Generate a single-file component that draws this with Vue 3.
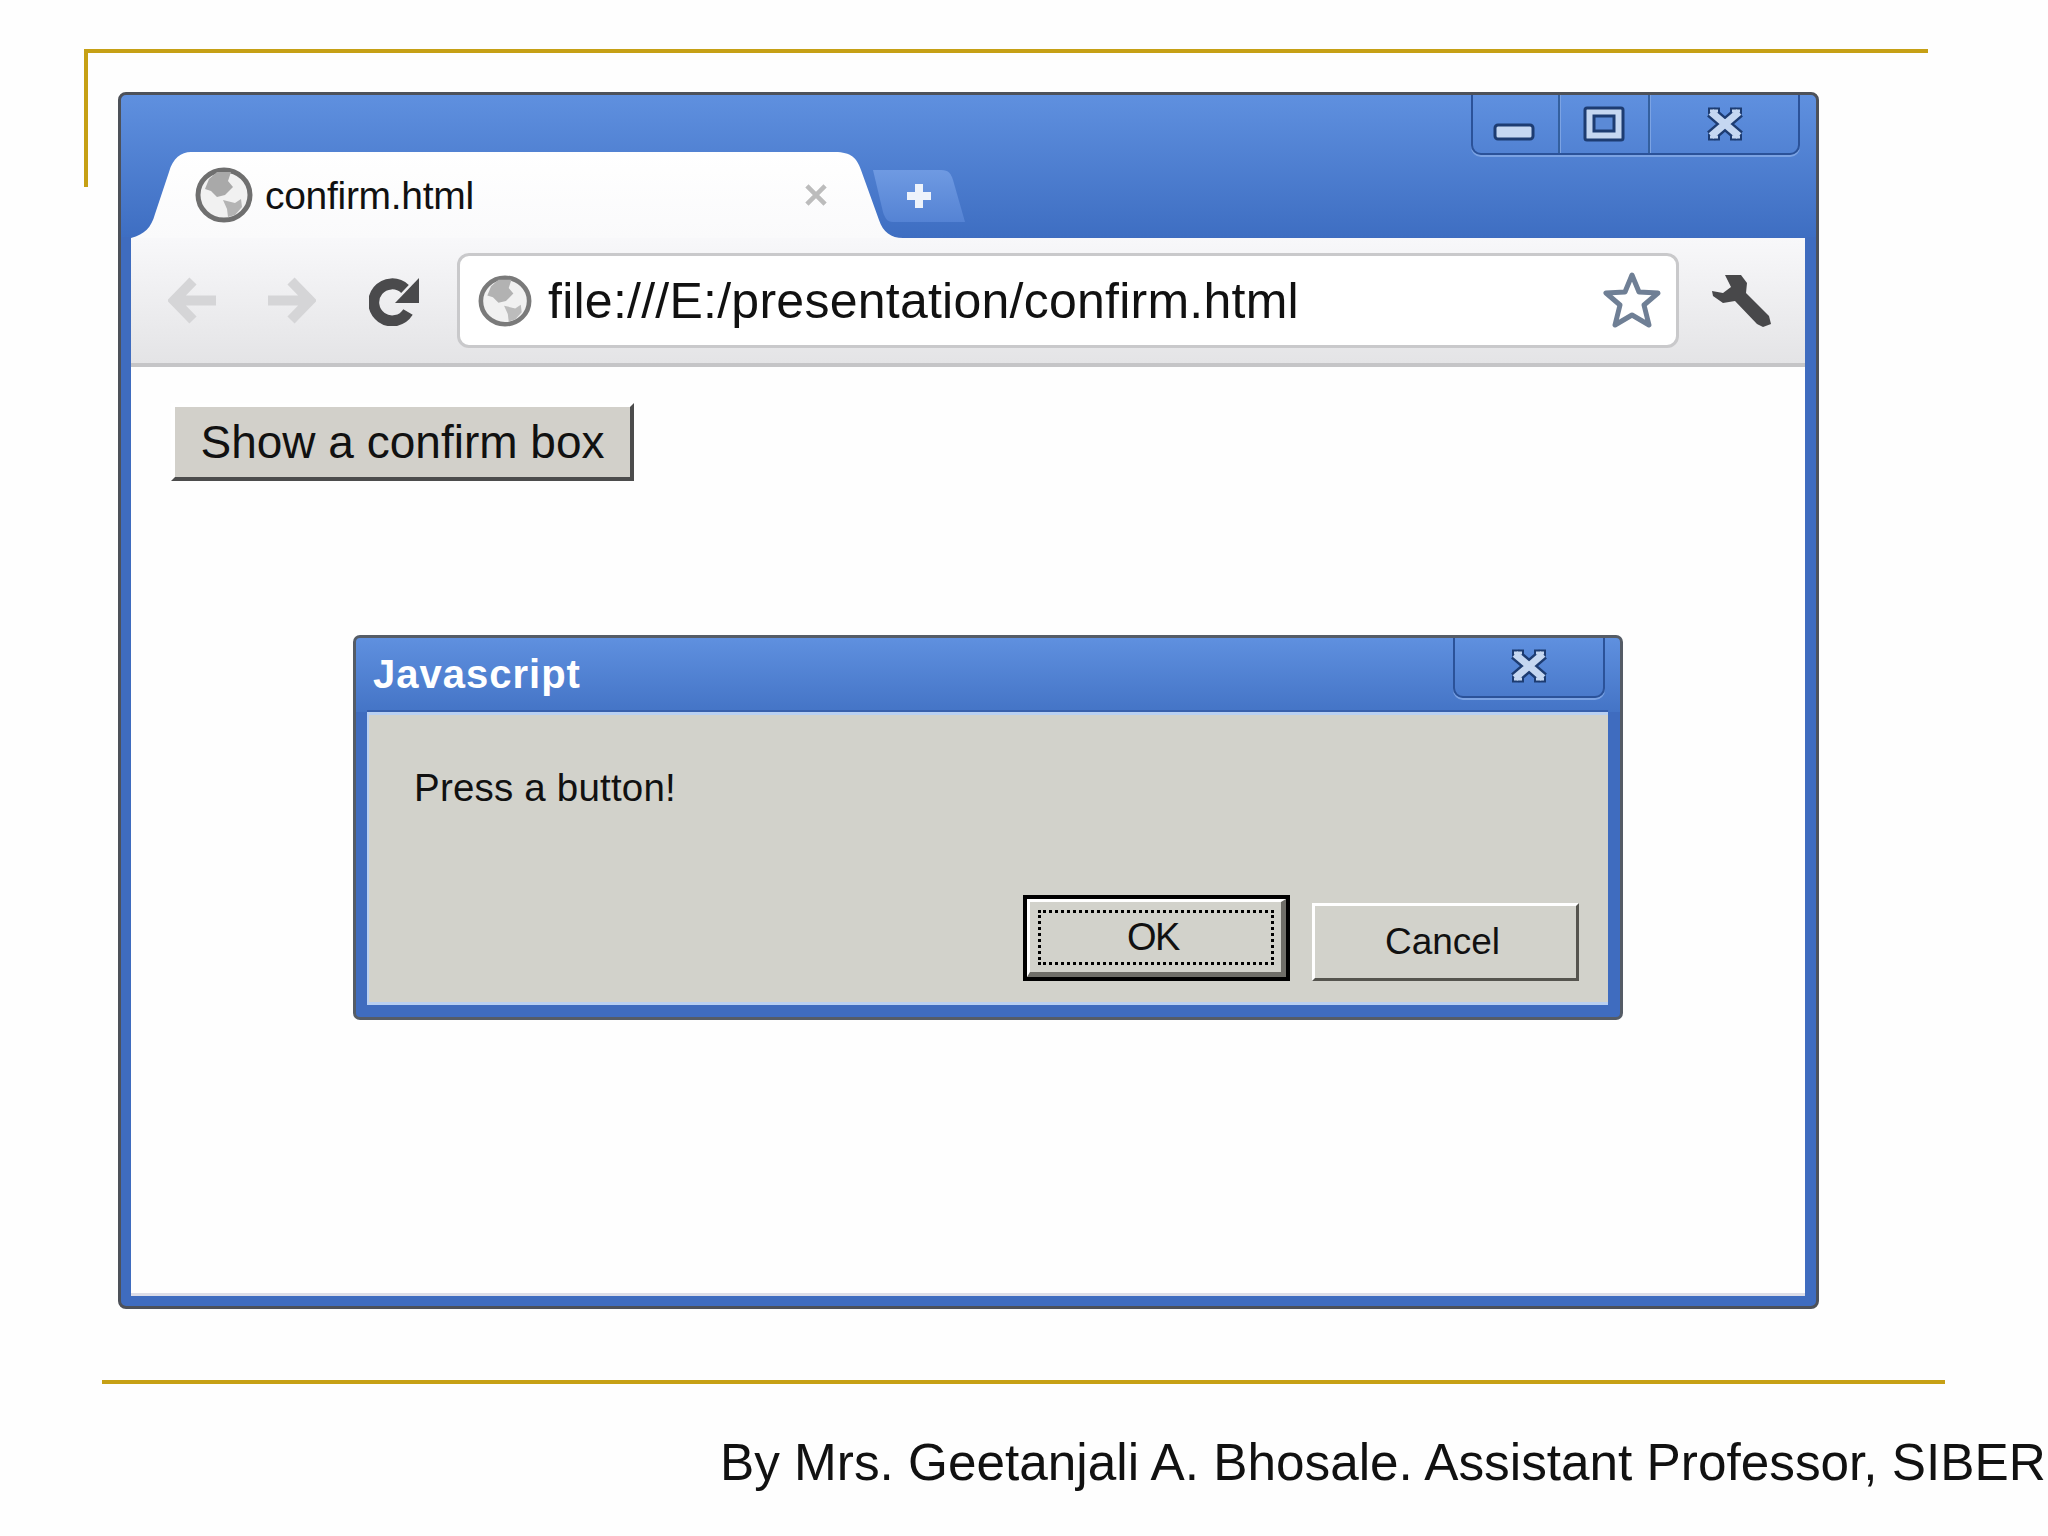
<template>
  <div class="slide">
    <div class="top-rule"></div>

    <div class="browser">
      <div class="titlebar">
        <div class="tabstrip">
          <div class="tab">
            <svg class="globe" viewBox="0 0 58 56">
              <ellipse cx="29" cy="28" rx="26" ry="25" fill="#f1f1f1" stroke="#6f6f6f" stroke-width="5" />
              <path d="M22 5 L36 5 L33 14 L38 20 L30 28 L22 30 L16 24 L10 22 L14 12 Z" fill="#a9a9a9" />
              <path d="M28 33 L40 36 L46 32 L47 40 L40 48 L33 50 L32 42 Z" fill="#b4b4b4" />
            </svg>
            <span class="tab-title">confirm.html</span>
            <svg class="tab-close" viewBox="0 0 20 20">
              <path d="M3 3 L17 17 M17 3 L3 17" stroke="#bcbcbc" stroke-width="3.5" fill="none" />
            </svg>
          </div>
          <div class="newtab">
            <svg class="plus" viewBox="0 0 26 26">
              <path d="M13 1 V25 M1 13 H25" stroke="#eef3fb" stroke-width="8" fill="none" />
            </svg>
          </div>
        </div>
        <div class="win-controls">
          <div class="win-btn min">
            <svg width="42" height="18" viewBox="0 0 42 18">
              <rect x="2" y="2" width="38" height="14" rx="3" fill="#c5d7f1" stroke="#1d3c72" stroke-width="3" />
            </svg>
          </div>
          <div class="win-btn max">
            <svg width="42" height="36" viewBox="0 0 42 36">
              <rect x="2" y="2" width="38" height="32" rx="2" fill="#c5d7f1" stroke="#1d3c72" stroke-width="3" />
              <rect x="11" y="10" width="20" height="15" fill="#5b8ad6" stroke="#1d3c72" stroke-width="3" />
            </svg>
          </div>
          <div class="win-btn close">
            <svg width="40" height="34" viewBox="0 0 40 34">
              <path d="M6 5 L34 29 M34 5 L6 29" stroke="#1d3c72" stroke-width="12" fill="none" />
              <path d="M3 4 H15 M25 4 H37 M3 30 H15 M25 30 H37" stroke="#1d3c72" stroke-width="7" fill="none" />
              <path d="M6 5 L34 29 M34 5 L6 29" stroke="#c5d7f1" stroke-width="7" fill="none" />
              <path d="M5 4 H13 M27 4 H35 M5 30 H13 M27 30 H35" stroke="#c5d7f1" stroke-width="3" fill="none" />
            </svg>
          </div>
        </div>
      </div>

      <div class="toolbar">
        <svg class="nav back" viewBox="0 0 50 47">
          <path d="M48 23.5 H8 M25 4 L6 23.5 L25 43" stroke="#d5d5d7" stroke-width="10" fill="none" />
        </svg>
        <svg class="nav forward" viewBox="0 0 50 47">
          <path d="M2 23.5 H42 M25 4 L44 23.5 L25 43" stroke="#d5d5d7" stroke-width="10" fill="none" />
        </svg>
        <svg class="reload" viewBox="0 0 51 50">
          <path d="M39 36 A18.5 18.5 0 1 1 36 13" stroke="#4a4a4c" stroke-width="11" fill="none" />
          <polygon points="50,2 50,27 26,27" fill="#4a4a4c" />
        </svg>
        <div class="address">
          <svg class="globe small" viewBox="0 0 58 56">
            <ellipse cx="29" cy="28" rx="26" ry="25" fill="#f1f1f1" stroke="#7a7a7a" stroke-width="5" />
            <path d="M22 5 L36 5 L33 14 L38 20 L30 28 L22 30 L16 24 L10 22 L14 12 Z" fill="#b2b2b2" />
            <path d="M28 33 L40 36 L46 32 L47 40 L40 48 L33 50 L32 42 Z" fill="#bcbcbc" />
          </svg>
          <span class="url">file:///E:/presentation/confirm.html</span>
          <svg class="star" viewBox="0 0 58 59">
            <polygon points="29,4 36,21 55,22 41,34 46,54 29,44 12,54 17,34 3,22 22,21"
              fill="#fff" stroke="#6f7f95" stroke-width="5" stroke-linejoin="round" />
          </svg>
        </div>
        <svg class="wrench" viewBox="0 0 60 53">
          <path d="M14 1 L30 1 L36 9 L35 19 L58 42 L60 50 L52 53 L46 50 L24 27 L12 29 L2 22 L1 17 L12 19 L20 13 Z" fill="#48484a" />
        </svg>
      </div>

      <div class="page">
        <button class="show-btn">Show a confirm box</button>

        <div class="dialog">
          <div class="dialog-title">
            <span class="dialog-name">Javascript</span>
            <div class="dialog-close">
              <svg width="40" height="34" viewBox="0 0 40 34">
                <path d="M6 5 L34 29 M34 5 L6 29" stroke="#1d3c72" stroke-width="12" fill="none" />
                <path d="M3 4 H15 M25 4 H37 M3 30 H15 M25 30 H37" stroke="#1d3c72" stroke-width="7" fill="none" />
                <path d="M6 5 L34 29 M34 5 L6 29" stroke="#c5d7f1" stroke-width="7" fill="none" />
                <path d="M5 4 H13 M27 4 H35 M5 30 H13 M27 30 H35" stroke="#c5d7f1" stroke-width="3" fill="none" />
              </svg>
            </div>
          </div>
          <div class="dialog-body">
            <p class="message">Press a button!</p>
            <div class="dialog-actions">
              <button class="btn-ok"><span class="ok-inner"><span class="ok-focus">OK</span></span></button>
              <button class="btn-cancel">Cancel</button>
            </div>
          </div>
        </div>
      </div>
    </div>

    <div class="bottom-rule"></div>
    <div class="footer">By Mrs. Geetanjali A. Bhosale. Assistant Professor, SIBER</div>
  </div>
</template>

<script setup>
</script>

<style>
html, body {
  margin: 0;
  background: #fff;
  overflow: hidden;
}
</style>

<style scoped>
.slide {
  position: relative;
  width: 2048px;
  height: 1536px;
  padding-top: 92px;
  box-sizing: border-box;
  overflow: hidden;
  background: #fefefe;
  font-family: "Liberation Sans", Arial, sans-serif;
  color: #000;
}

.top-rule {
  position: absolute;
  left: 84px;
  top: 49px;
  width: 1844px;
  height: 138px;
  box-sizing: border-box;
  border-top: 4px solid #c6a015;
  border-left: 4px solid #c6a015;
}

.browser {
  position: relative;
  width: 1701px;
  height: 1217px;
  margin-left: 118px;
  box-sizing: border-box;
  padding: 0 11px 10px 10px;
  display: flex;
  flex-direction: column;
  border: 3px solid #4d5159;
  border-radius: 8px;
  background: linear-gradient(#5f90df 0, #3e6ec2 142px, #3f6cbf 142px);
}

.titlebar {
  display: flex;
  height: 143px;
  flex-shrink: 0;
}

.tabstrip {
  display: flex;
  align-self: flex-end;
  height: 86px;
}

.tab {
  width: 772px;
  height: 86px;
  box-sizing: border-box;
  padding: 0 74px 0 64px;
  display: flex;
  align-items: center;
  background: linear-gradient(#fff, #fafafb);
  clip-path: path("M0 86 C14 82 20 76 24 62 L38 20 C42 6 50 0 60 0 L704 0 C720 0 726 6 730 18 L748 68 C752 80 760 86 772 86 Z");
}

.globe {
  width: 58px;
  height: 56px;
  flex-shrink: 0;
}

.tab-title {
  margin-left: 12px;
  padding-top: 2px;
  font-size: 39px;
  line-height: 44px;
  letter-spacing: -0.3px;
  color: #111;
}

.tab-close {
  margin-left: auto;
  width: 26px;
  height: 26px;
}

.newtab {
  width: 92px;
  height: 52px;
  margin: 18px 0 0 -30px;
  display: flex;
  align-items: center;
  justify-content: center;
  background: linear-gradient(#6f9ae2, #5583d4);
  clip-path: path("M0 0 L68 0 C76 0 78 4 80 10 L92 52 L20 52 C14 52 12 48 10 42 Z");
}

.plus {
  width: 26px;
  height: 26px;
}

.win-controls {
  display: flex;
  flex-shrink: 0;
  align-self: flex-start;
  margin-left: auto;
  margin-right: 5px;
  width: 329px;
  height: 60px;
  box-sizing: border-box;
  border: 2px solid #2b5299;
  border-top: none;
  border-radius: 0 0 10px 10px;
  box-shadow: 0 2px 0 #7ca3e3;
}

.win-btn {
  display: flex;
  align-items: center;
  justify-content: center;
  box-sizing: border-box;
  border-right: 2px solid #34609f;
  box-shadow: 1px 0 0 #7ca3e3;
}

.win-btn.min {
  width: 87px;
  padding-top: 16px;
  padding-right: 3px;
}

.win-btn.max {
  width: 90px;
}

.win-btn.close {
  flex: 1;
  border-right: none;
  box-shadow: none;
  padding-bottom: 1px;
  padding-left: 2px;
}

.toolbar {
  display: flex;
  align-items: center;
  height: 129px;
  flex-shrink: 0;
  box-sizing: border-box;
  padding-left: 37px;
  border-bottom: 4px solid #c5c5c7;
  background: linear-gradient(#f8f8fa, #e4e4e6);
}

.nav {
  width: 50px;
  height: 47px;
}

.nav.forward {
  margin-left: 48px;
}

.reload {
  width: 51px;
  height: 50px;
  margin-left: 53px;
}

.address {
  display: flex;
  align-items: center;
  width: 1222px;
  height: 95px;
  margin-left: 37px;
  box-sizing: border-box;
  padding: 0 15px 0 18px;
  border: 3px solid #c9c9cb;
  border-radius: 12px;
  background: #fff;
}

.globe.small {
  width: 54px;
  height: 52px;
}

.url {
  margin-left: 16px;
  font-size: 50px;
  line-height: 60px;
  letter-spacing: 0.25px;
  white-space: nowrap;
  color: #111;
}

.star {
  margin-left: auto;
  width: 58px;
  height: 59px;
}

.wrench {
  width: 60px;
  height: 53px;
  margin-left: 32px;
}

.page {
  flex: 1;
  padding: 36px 0 0 40px;
  background: #fefefe;
  border-bottom: 3px solid #dcdde8;
}

.show-btn {
  display: flex;
  align-items: center;
  justify-content: center;
  width: 463px;
  height: 78px;
  padding: 0;
  box-sizing: border-box;
  border-style: solid;
  border-width: 4px;
  border-color: #fff #4c4c4c #4c4c4c #fff;
  background: #d2d0ca;
  font-family: inherit;
  font-size: 46px;
  color: #111;
}

.dialog {
  width: 1270px;
  height: 385px;
  margin: 154px 0 0 182px;
  box-sizing: border-box;
  display: flex;
  flex-direction: column;
  padding: 0 12px 12px 11px;
  border: 3px solid #555c66;
  border-radius: 7px;
  background: linear-gradient(#5f90df 0, #4474c6 74px, #3f6cbf 74px);
}

.dialog-title {
  display: flex;
  justify-content: space-between;
  height: 74px;
  flex-shrink: 0;
  margin-left: 6px;
}

.dialog-name {
  padding-top: 14px;
  font-size: 40px;
  line-height: 44px;
  font-weight: 700;
  letter-spacing: 1px;
  color: #fff;
}

.dialog-close {
  display: flex;
  align-items: center;
  justify-content: center;
  width: 152px;
  height: 60px;
  margin-right: 3px;
  box-sizing: border-box;
  padding-bottom: 2px;
  border: 2px solid #2b5299;
  border-top: none;
  border-radius: 0 0 10px 10px;
  box-shadow: 0 2px 0 #7ca3e3;
}

.dialog-body {
  flex: 1;
  display: flex;
  flex-direction: column;
  box-sizing: border-box;
  padding: 51px 29px 21px 45px;
  border: 2px solid #b9d0f2;
  border-width: 3px 0 3px 2px;
  box-shadow: 0 -2px 0 #3860ac;
  background: #d2d2cb;
}

.message {
  margin: 0;
  font-size: 38.5px;
  line-height: 44px;
  letter-spacing: 0.2px;
  color: #111;
}

.dialog-actions {
  margin-top: auto;
  display: flex;
  justify-content: flex-end;
  align-items: flex-end;
  gap: 22px;
}

.btn-ok {
  width: 267px;
  height: 86px;
  padding: 0;
  box-sizing: border-box;
  border: 4px solid #000;
  background: #d2d2cb;
  font-family: inherit;
}

.ok-inner {
  display: block;
  height: 100%;
  box-sizing: border-box;
  padding: 8px 7px 7px 8px;
  border-style: solid;
  border-width: 3px 5px 5px 3px;
  border-color: #fff #6f6e68 #6f6e68 #fff;
}

.ok-focus {
  display: flex;
  align-items: center;
  justify-content: center;
  height: 100%;
  box-sizing: border-box;
  padding-right: 6px;
  border: 3px dotted #000;
  font-size: 38px;
  letter-spacing: -1.5px;
  color: #111;
}

.btn-cancel {
  width: 267px;
  height: 78px;
  padding: 0 6px 0 0;
  box-sizing: border-box;
  border-style: solid;
  border-width: 3px;
  border-color: #fff #55544e #55544e #fff;
  background: #d2d2cb;
  font-family: inherit;
  font-size: 37px;
  color: #111;
}

.bottom-rule {
  width: 1843px;
  height: 4px;
  margin: 71px 0 0 102px;
  background: #c6a015;
}

.footer {
  margin: 49px 0 0 720px;
  font-size: 51.3px;
  line-height: 60px;
  white-space: nowrap;
  color: #111;
}
</style>
